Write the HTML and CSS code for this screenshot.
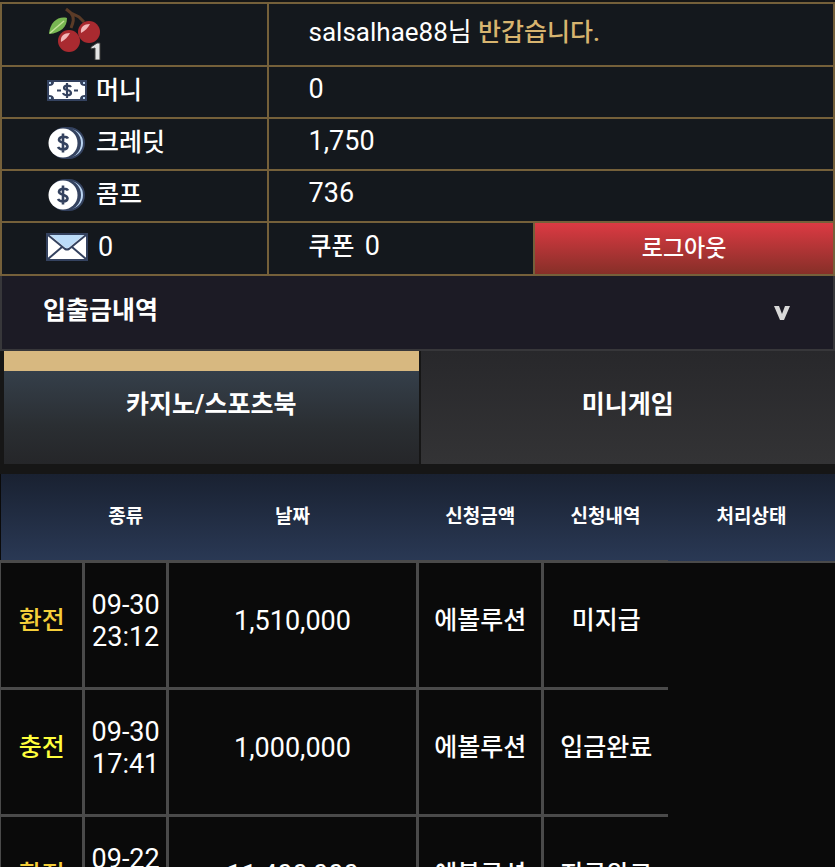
FILE: index.html
```html
<!DOCTYPE html>
<html lang="ko">
	<head>
		<meta charset="utf-8">
		<meta name="viewport" content="width=device-width, initial-scale=1">
		<title>입출금내역</title>
		<link rel="stylesheet" href="styles.css">
	</head>
	<body>
		<svg class="defs" aria-hidden="true">
			<defs>
				<symbol id="coin" viewBox="0 0 42 34">
					<circle cx="23" cy="17" r="15" fill="#bcd6f2" stroke="#34425f" stroke-width="2"/>
					<circle cx="19" cy="17" r="16" fill="#34425f"/>
					<circle cx="17" cy="17" r="14.5" fill="#fff"/>
					<path d="M22 12.500C21 10.500 14 9.500 13 13.500C12.500 17.500 21.500 16 21.500 20.500C21 24.500 13.500 24 12 21M17 7.500V26.500" fill="none" stroke="#34425f" stroke-width="2.600"/>
				</symbol>
			</defs>
		</svg>
		<div id="wrap">
			<table class="user">
				<colgroup>
					<col class="w32">
					<col class="w32">
					<col>
				</colgroup>
				<tr class="top">
					<td>
						<svg class="cherry" width="58" height="54" viewBox="0 0 58 54">
							<path d="M20 3L25 7L33 11L38 16M25 7C29 12 27 17 25 22" fill="none" stroke="#5b3b27" stroke-width="3"/>
							<path d="M3 28C4 16 12 10 21 12C21 21 15 27 3 28Z" fill="#78b752"/>
							<path d="M4 27L18 15" stroke="#c5e39a" stroke-width="1.500"/>
							<circle cx="23" cy="35" r="11" fill="#a92a30"/>
							<circle cx="43" cy="26" r="11" fill="#a92a30"/>
							<path d="M15 36C14 30 18 27 24 27C22 31 19 34 15 36Z" fill="#f1b6b8"/>
							<path d="M35 27C34 21 38 18 44 18C42 22 39 25 35 27Z" fill="#f1b6b8"/>
							<path d="M45 41L51 37H54V54H49V42L45 43Z" fill="#e4e4e4" stroke="#3c3c3c"/>
						</svg>
					</td>
					<td colspan="2"><span class="name">salsalhae88님</span> <span class="hello">반갑습니다.</span></td>
				</tr>
				<tr>
					<td>
						<div class="label">
							<svg width="42" height="24" viewBox="0 0 42 24">
								<rect x="1" y="1" width="40" height="21" fill="#34425f"/>
								<path d="M8 3H34Q34 7 39 7V16Q34 16 34 20H8Q8 16 3 16V7Q8 7 8 3Z" fill="#fff"/>
								<path d="M3 3H5V5H3ZM37 3H39V5H37ZM3 18H5V20H3ZM37 18H39V20H37Z" fill="#bcd6f2"/>
								<path d="M25 8C24 6 18 6 18 9C18 12 25 10 25 14C25 17 18 17 17 14M21 4V19M11 11.500H15M28 11.500H32" fill="none" stroke="#34425f" stroke-width="2.200"/>
							</svg>
							<span>머니</span>
						</div>
					</td>
					<td colspan="2"><span class="num">0</span></td>
				</tr>
				<tr>
					<td>
						<div class="label">
							<svg width="42" height="34"><use href="#coin"/></svg>
							<span>크레딧</span>
						</div>
					</td>
					<td colspan="2"><span class="num">1,750</span></td>
				</tr>
				<tr>
					<td>
						<div class="label">
							<svg width="42" height="34"><use href="#coin"/></svg>
							<span>콤프</span>
						</div>
					</td>
					<td colspan="2"><span class="num">736</span></td>
				</tr>
				<tr class="bottom">
					<td>
						<div class="label">
							<svg width="42" height="28" viewBox="0 0 42 28">
								<rect x="1" y="1" width="40" height="26" fill="#fff" stroke="#34425f" stroke-width="2"/>
								<path d="M4 2H38L21 16Z" fill="#bcdcf8"/>
								<path d="M2 2L19 16Q21 17 23 16L40 2M2 26L16 14M40 26L26 14" fill="none" stroke="#34425f" stroke-width="2"/>
							</svg>
							<span class="num mail">0</span>
						</div>
					</td>
					<td>쿠폰 <span class="num coupon">0</span></td>
					<td class="out"><button type="button" class="logout">로그아웃</button></td>
				</tr>
			</table>
			<button type="button" class="title">
				<span>입출금내역</span>
				<svg width="18" height="16" viewBox="0 0 18 16">
					<path d="M1 1H6L9 9L12 1H17L11 15H7Z" fill="#d8d8d8"/>
				</svg>
			</button>
			<div class="tabs">
				<button type="button" class="tab on">카지노/스포츠북</button>
				<button type="button" class="tab">미니게임</button>
			</div>
			<table class="list">
				<thead>
					<tr>
						<th class="w10"></th>
						<th class="w10">종류</th>
						<th class="w30">날짜</th>
						<th class="w15">신청금액</th>
						<th class="w15">신청내역</th>
						<th class="w20">처리상태</th>
					</tr>
				</thead>
				<tbody>
					<tr>
						<td class="exchange">환전</td>
						<td class="num">09-30<br>23:12</td>
						<td class="num">1,510,000</td>
						<td>에볼루션</td>
						<td>미지급</td>
					</tr>
					<tr>
						<td class="charge">충전</td>
						<td class="num">09-30<br>17:41</td>
						<td class="num">1,000,000</td>
						<td>에볼루션</td>
						<td>입금완료</td>
					</tr>
					<tr>
						<td class="exchange">환전</td>
						<td class="num">09-22<br>20:15</td>
						<td class="num">11,400,000</td>
						<td>에볼루션</td>
						<td>지급완료</td>
					</tr>
				</tbody>
			</table>
		</div>
	</body>
</html>
```
FILE: styles.css
```css
html, body {
	height: 100%;
}
body {
	margin: 0;
	background-color: #161616;
	color: #fff;
	font-family: Roboto, "Noto Sans CJK KR", sans-serif;
	font-size: 25px;
	font-weight: 500;
	line-height: 32px;
}
button {
	margin: 0;
	padding: 0;
	border: none;
	color: #fff;
	font-family: inherit;
	font-size: 25px;
	font-weight: 500;
	line-height: 32px;
	cursor: pointer;
}
svg {
	display: block;
	flex: none;
}
.defs {
	position: absolute;
	width: 0;
	height: 0;
}
#wrap {
	box-sizing: border-box;
	height: 100%;
	padding-top: 2px;
	overflow-y: auto;
	scrollbar-width: none;
}
.num {
	font-size: 27px;
	font-weight: 400;
}

/* member info */
.user {
	width: 100%;
	table-layout: fixed;
	border-collapse: collapse;
	background-color: #14181d;
}
.user td {
	box-sizing: border-box;
	height: 52px;
	padding: 0 0 5px 40px;
	border: solid 2px #75603a;
}
.user td:first-child {
	padding: 0 0 3px 44px;
}
.user .top td {
	height: 63px;
}
.user .bottom td {
	height: 53px;
}
.user td.out {
	padding: 0;
}
.w32 {
	width: 32%;
}
.name {
	font-size: 26px;
	font-weight: 400;
}
.hello {
	color: #d7b46f;
}
.label {
	display: flex;
	align-items: center;
	gap: 8px;
}
.mail {
	padding-left: 2px;
}
.coupon {
	padding-left: 4px;
}
.logout {
	display: block;
	width: 100%;
	height: 51px;
	background: linear-gradient(#dc3a43, #862f28);
	font-size: 23px;
}

/* page title */
.title {
	display: flex;
	align-items: center;
	justify-content: space-between;
	box-sizing: border-box;
	width: 100%;
	height: 75px;
	padding: 0 42px 4px 41px;
	border: solid 2px #37373a;
	border-top: none;
	background-color: #1c1b25;
	font-weight: bold;
}
.title svg {
	margin-top: 5px;
}

/* tabs */
.tabs {
	display: flex;
	gap: 2px;
	padding-left: 4px;
	margin-bottom: 10px;
}
.tab {
	flex: 1;
	height: 113px;
	padding-bottom: 6px;
	background: linear-gradient(#28282b, #333335);
	font-weight: bold;
}
.tab.on {
	padding-bottom: 26px;
	border-top: solid 20px #d7b880;
	background: linear-gradient(#353f4a, #2a2e32 60%, #252629);
}

/* history */
.list {
	width: 100%;
	table-layout: fixed;
	border-collapse: collapse;
	background-color: #0a0a0a;
	text-align: center;
}
.list thead {
	background: linear-gradient(#192131, #2a3955);
}
.list th {
	height: 86px;
	padding: 0;
	border-bottom: solid 2px #4a4a4a;
	font-size: 19px;
}
.list td {
	box-sizing: border-box;
	height: 127px;
	padding: 0 0 8px;
	border: solid 3px #4a4a4a;
}
.list td:first-child {
	border-left-width: 1px;
}
.list td:last-child {
	border-right: none;
}
.w10 {
	width: 10%;
}
.w15 {
	width: 15%;
}
.w20 {
	width: 20%;
}
.w30 {
	width: 30%;
}
.exchange {
	color: #f5cf3a;
}
.charge {
	color: #ffff3c;
}
```
